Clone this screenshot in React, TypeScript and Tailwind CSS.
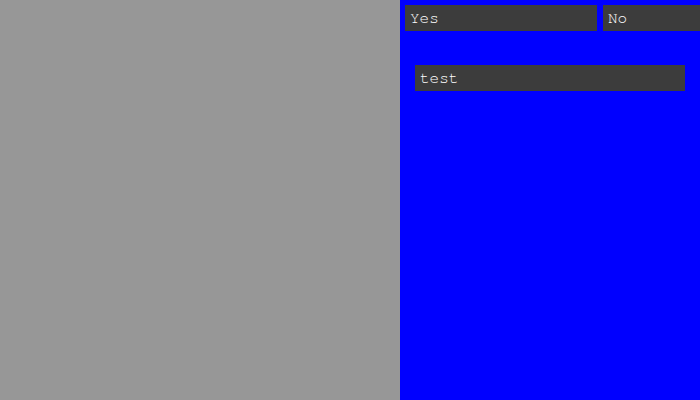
export default function App() {
  return (
    <div className="flex w-[700px] h-[400px] overflow-hidden font-[family-name:'Nimbus_Mono_PS','FreeMono','Courier','Liberation_Mono',monospace] text-[16px] leading-none text-white">
      <div className="w-[400px] h-full bg-[#979797] shrink-0" />
      <div className="w-[300px] h-full bg-[#0000ff] overflow-hidden shrink-0">
        <div className="flex gap-[6px] pl-[5px] pt-[5px] w-max">
          <div className="w-[192px] h-[26px] bg-[#3c3c3c] pl-[5px] flex items-center">Yes</div>
          <div className="w-[192px] h-[26px] bg-[#3c3c3c] pl-[5px] flex items-center">No</div>
        </div>
        <div className="mx-[15px] mt-[34px] h-[26px] bg-[#3c3c3c] pl-[5px] flex items-center">test</div>
      </div>
    </div>
  );
}
